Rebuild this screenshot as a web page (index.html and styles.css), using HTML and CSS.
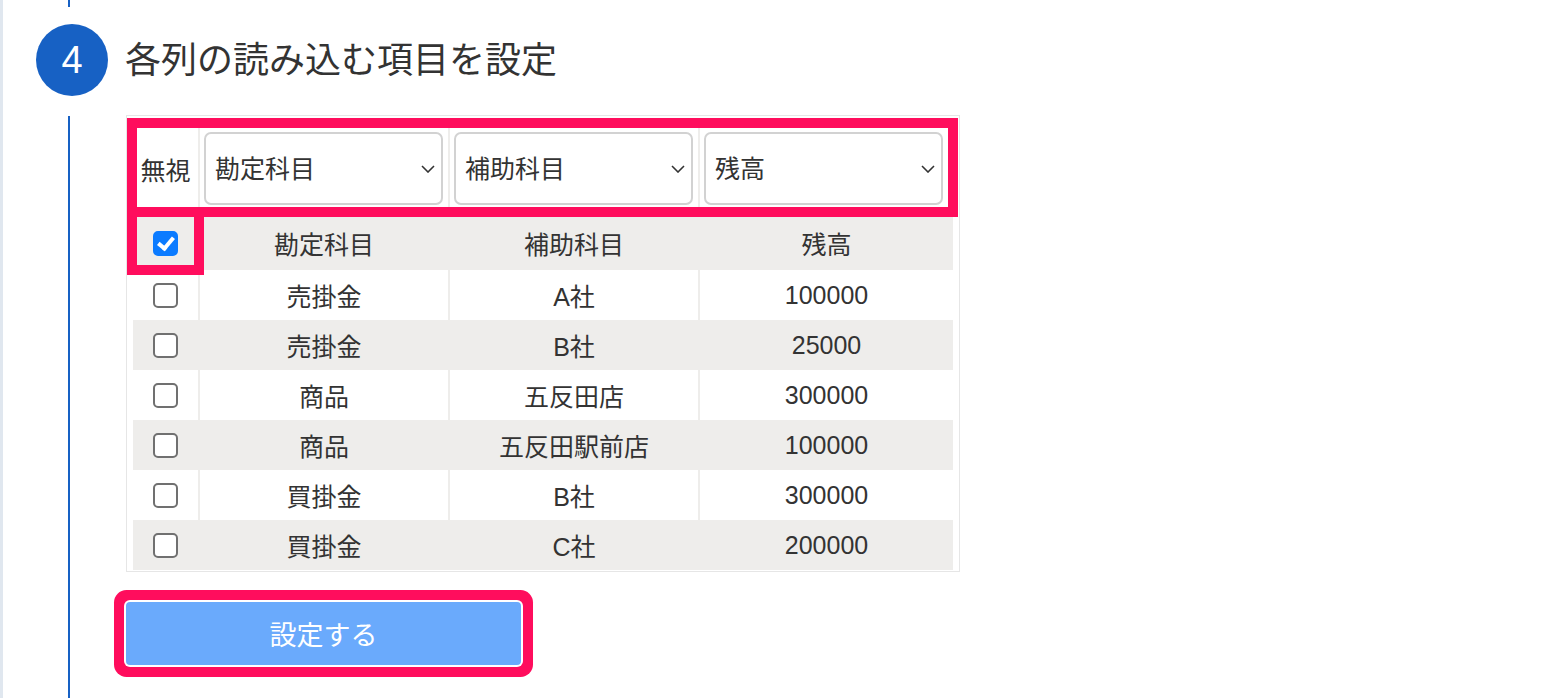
FILE: index.html
```html
<!DOCTYPE html>
<html lang="ja">
<head>
    <meta charset="UTF-8">
    <meta name="viewport" content="width=device-width, initial-scale=1.0">
    <title>各列の読み込む項目を設定</title>
    <link rel="stylesheet" href="styles.css">
</head>
<body>

    <div class="page">
        <div class="step">
            <div class="rail">
                <span class="rail-line rail-line-top"></span>
                <span class="step-num">4</span>
                <span class="rail-line rail-line-bottom"></span>
            </div>

            <div class="step-body">
                <h2 class="step-title">各列の読み込む項目を設定</h2>

                <div class="table-wrap">
                    <table class="import-table">
                        <colgroup>
                            <col class="col-check">
                            <col class="col-mid">
                            <col class="col-mid">
                            <col class="col-last">
                        </colgroup>
                        <tr class="select-row">
                            <td>無視</td>
                            <td>
                                <div class="select-box">
                                    <select><option>勘定科目</option><option>補助科目</option><option>残高</option></select>
                                    <svg class="chevron" width="14" height="8" viewBox="0 0 14 8"><polyline points="1,1 7,7 13,1"/></svg>
                                </div>
                            </td>
                            <td>
                                <div class="select-box">
                                    <select><option>補助科目</option><option>勘定科目</option><option>残高</option></select>
                                    <svg class="chevron" width="14" height="8" viewBox="0 0 14 8"><polyline points="1,1 7,7 13,1"/></svg>
                                </div>
                            </td>
                            <td>
                                <div class="select-box">
                                    <select><option>残高</option><option>勘定科目</option><option>補助科目</option></select>
                                    <svg class="chevron" width="14" height="8" viewBox="0 0 14 8"><polyline points="1,1 7,7 13,1"/></svg>
                                </div>
                            </td>
                        </tr>
                        <tr class="head-row gray">
                            <td><input class="check" type="checkbox" checked></td>
                            <td>勘定科目</td>
                            <td>補助科目</td>
                            <td>残高</td>
                        </tr>
                        <tr>
                            <td><input class="check" type="checkbox"></td>
                            <td>売掛金</td>
                            <td>A社</td>
                            <td>100000</td>
                        </tr>
                        <tr class="gray">
                            <td><input class="check" type="checkbox"></td>
                            <td>売掛金</td>
                            <td>B社</td>
                            <td>25000</td>
                        </tr>
                        <tr>
                            <td><input class="check" type="checkbox"></td>
                            <td>商品</td>
                            <td>五反田店</td>
                            <td>300000</td>
                        </tr>
                        <tr class="gray">
                            <td><input class="check" type="checkbox"></td>
                            <td>商品</td>
                            <td>五反田駅前店</td>
                            <td>100000</td>
                        </tr>
                        <tr>
                            <td><input class="check" type="checkbox"></td>
                            <td>買掛金</td>
                            <td>B社</td>
                            <td>300000</td>
                        </tr>
                        <tr class="gray">
                            <td><input class="check" type="checkbox"></td>
                            <td>買掛金</td>
                            <td>C社</td>
                            <td>200000</td>
                        </tr>
                    </table>

                    <div class="mark mark-select"></div>
                    <div class="mark mark-check"></div>
                </div>

                <button class="submit">設定する</button>
            </div>
        </div>
    </div>

</body>
</html>
```

FILE: styles.css
```css
body {
    margin: 0;
    font-family: 'Liberation Sans', 'Noto Sans CJK JP', sans-serif;
    color: #333;
    background: #fff;
}

.page {
    border-left: 3px solid #e0e7ef;
    min-height: 100vh;
}

.step {
    display: flex;
    min-height: 100vh;
}

.rail {
    width: 104px;
    flex-shrink: 0;
    display: flex;
    flex-direction: column;
    align-items: flex-start;
}

.rail-line {
    display: block;
    width: 2px;
    margin-left: 65px;
    background-color: #1761c4;
}

.rail-line-top {
    height: 7px;
}

.rail-line-bottom {
    flex: 1;
    margin-top: 20px;
}

.step-num {
    display: flex;
    justify-content: center;
    align-items: center;
    width: 72px;
    height: 72px;
    margin-top: 17px;
    margin-left: 33px;
    border-radius: 50%;
    background-color: #1761c4;
    color: #fff;
    font-size: 38px;
}

.step-body {
    padding-top: 24px;
    padding-left: 18px;
}

.step-title {
    margin: 0;
    height: 72px;
    line-height: 74px;
    font-size: 36px;
    font-weight: normal;
    color: #333;
}

.table-wrap {
    position: relative;
    width: 820px;
    margin-top: 19px;
    margin-left: 1px;
    padding: 5px 6px 1px 6px;
    border: 1px solid #e6e6e6;
}

.import-table {
    width: 820px;
    table-layout: fixed;
    border-collapse: separate;
    border-spacing: 0;
    font-size: 25px;
}

.col-check {
    width: 65px;
}

.col-mid {
    width: 250px;
}

.col-last {
    width: 255px;
}

.import-table td {
    height: 50px;
    padding: 0;
    text-align: center;
    vertical-align: middle;
}

.import-table td + td {
    border-left: 2px solid #eeedeb;
}

.import-table .gray td {
    background-color: #eeedeb;
}

.import-table .head-row td {
    height: 54px;
}

.import-table .select-row td {
    height: 73px;
    padding: 11px 0;
}

.import-table .select-row td + td {
    text-align: left;
    padding-left: 4px;
}

.select-box {
    position: relative;
    display: inline-block;
}

.select-box select {
    appearance: none;
    -webkit-appearance: none;
    display: block;
    width: 239px;
    height: 73px;
    padding: 0 30px 0 9px;
    border: 2px solid #d2d2d2;
    border-radius: 7px;
    background-color: #fff;
    font-family: inherit;
    font-size: 25px;
    color: #333;
}

.chevron {
    position: absolute;
    right: 8px;
    top: 33px;
    pointer-events: none;
}

.chevron polyline {
    fill: none;
    stroke: #333;
    stroke-width: 1.6;
}

.check {
    appearance: none;
    -webkit-appearance: none;
    position: relative;
    display: block;
    width: 25px;
    height: 25px;
    margin: 0 auto;
    border: 2px solid #707070;
    border-radius: 5px;
    background-color: #fff;
}

.check:checked {
    background-color: #0b7bff;
    border-color: #0b7bff;
}

.check:checked::after {
    content: "";
    position: absolute;
    left: 6px;
    top: 1px;
    width: 6px;
    height: 12px;
    border: solid #fff;
    border-width: 0 4px 4px 0;
    transform: rotate(40deg);
}

/* pink highlight boxes drawn over the table */
.mark {
    position: absolute;
    box-sizing: border-box;
    border: 10px solid #ff0d5d;
    pointer-events: none;
}

.mark-select {
    left: 0;
    top: 2px;
    width: 831px;
    height: 99px;
}

.mark-check {
    left: 0;
    top: 91px;
    width: 77px;
    height: 68px;
}

.submit {
    display: block;
    width: 395px;
    height: 63px;
    margin-top: 30px;
    margin-left: 1px;
    border: none;
    border-radius: 4px;
    background-color: #6aaafc;
    color: #fff;
    font-family: inherit;
    font-size: 27px;
    box-shadow: 0 0 0 2px #fff, 0 0 0 12px #ff0d5d;
    cursor: pointer;
}
```
